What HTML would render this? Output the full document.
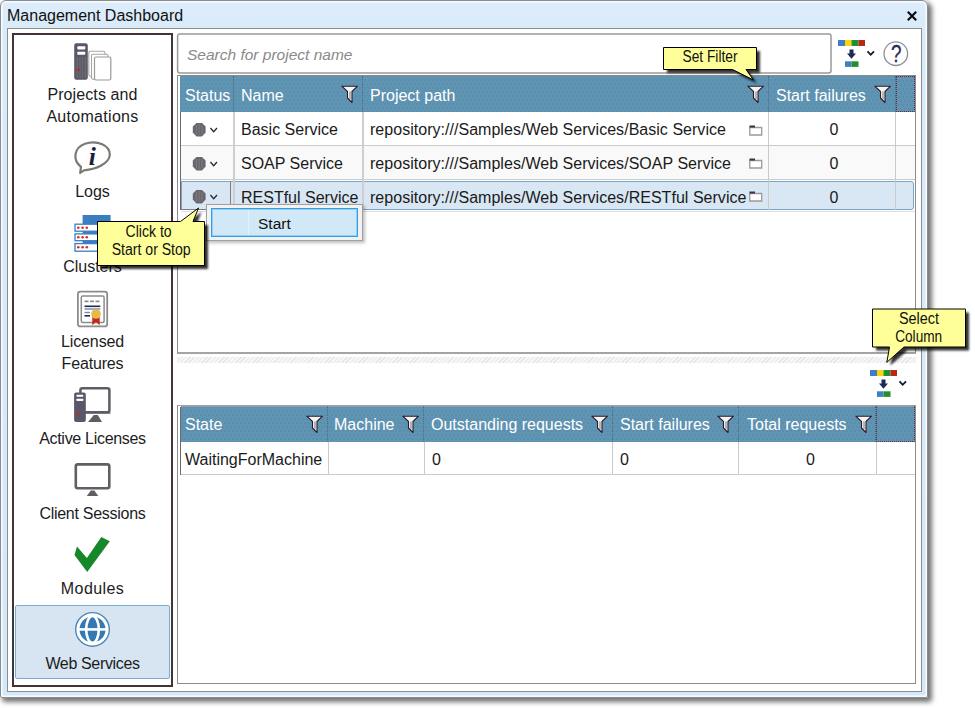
<!DOCTYPE html>
<html>
<head>
<meta charset="utf-8">
<title>Management Dashboard</title>
<style>
*{box-sizing:border-box;margin:0;padding:0}
html,body{width:975px;height:708px;background:#fff;overflow:hidden}
body{position:relative;font-family:"Liberation Sans",sans-serif;color:#1a1a1a}
.abs{position:absolute}
#win{position:absolute;left:0;top:0;width:928px;height:698px;border:1px solid #878c92;border-radius:6px 6px 2px 2px;
 background:linear-gradient(#ddedfb,#d9eaf9 28px,#d6e8f8);box-shadow:inset 0 0 0 1.500px rgba(255,255,255,.85),3px 3px 5px 1px rgba(0,0,0,.55)}
#title{position:absolute;left:6px;top:5px;font-size:16px;line-height:20px;color:#111}
#close{position:absolute;left:904px;top:8px;width:14px;height:14px}
#client{position:absolute;left:7px;top:28px;width:915px;height:664px;background:#fff;border:1px solid #8d8d8d}
#side{position:absolute;left:12px;top:33px;width:161px;height:654px;border:2px solid #433436;background:#fff}
.nav{position:absolute;left:0;width:157px;text-align:center;font-size:16px;line-height:21.5px;color:#1c1c1c}
#sel{position:absolute;left:15px;top:605px;width:155px;height:74px;background:#d6e5f1;border:1px solid #7cabd0;border-radius:2px}
#search{position:absolute;left:177px;top:33px;width:655px;height:41px;background:#fff}
#search span{position:absolute;left:10px;top:11.500px;font-size:15.500px;font-style:italic;color:#8a8a8a;line-height:20px}
.grid{position:absolute;left:177px;width:739px;border:1px solid #8c8c8c;background:#fff}
.hdr{position:absolute;background-color:#5f94b3;background-image:radial-gradient(circle,rgba(70,105,135,.2) .6px,transparent 1.1px),radial-gradient(circle,rgba(70,105,135,.2) .6px,transparent 1.1px);background-size:4px 8px;background-position:0 0,2px 4px;color:#fff;font-size:16px;line-height:39px;white-space:nowrap;border-right:1px dotted #4b6788}
.cell{position:absolute;font-size:16px;white-space:nowrap;color:#1a1a1a}
.call{position:absolute;background:#ffff99;border:1px solid #000;font-size:15px;text-align:center;color:#111;box-shadow:3px 3px 2px rgba(0,0,0,.75)}
</style>
</head>
<body>
<div id="win">
 <div id="title">Management Dashboard</div>
 <svg id="close" viewBox="0 0 14 14"><path d="M2.800 2.800 L11.200 11.200 M11.200 2.800 L2.800 11.200" stroke="#0a0a0a" stroke-width="2.100" fill="none"/></svg>
</div>
<div id="client"></div>
<div id="side">
 <div class="nav" style="top:49px"><span style="letter-spacing:.1px">Projects and</span><br><span style="letter-spacing:.3px">Automations</span></div>
 <div class="nav" style="top:146px">Logs</div>
 <div class="nav" style="top:221px">Clusters</div>
 <div class="nav" style="top:296px"><span style="letter-spacing:-.1px">Licensed</span><br><span style="letter-spacing:-.15px">Features</span></div>
 <div class="nav" style="top:393px;letter-spacing:-.3px">Active Licenses</div>
 <div class="nav" style="top:468px;letter-spacing:-.27px">Client Sessions</div>
 <div class="nav" style="top:543px;letter-spacing:.4px">Modules</div>
</div>
<div id="sel"></div>
<div class="nav" style="left:14px;top:653px;letter-spacing:-.35px">Web Services</div>
<div id="search"><span>Search for project name</span></div>
<svg class="abs" style="left:170px;top:30px" width="670" height="48" viewBox="170 30 670 48"><rect x="177.600" y="33.900" width="653.400" height="39" rx="2.200" fill="none" stroke="#999" stroke-width="1.500"/></svg>

<!-- upper grid -->
<div class="grid" style="top:75px;height:279px;border-bottom:2px solid #a4a4a4"></div>
<div class="abs" style="left:180px;top:76px;width:1px;height:134px;background:#6a6a6a"></div>
<div class="hdr" style="left:180px;top:76px;width:54px;height:36px;padding-left:5px">Status</div>
<div class="hdr" style="left:234px;top:76px;width:129px;height:36px;padding-left:7px">Name</div>
<div class="hdr" style="left:363px;top:76px;width:406px;height:36px;padding-left:7px">Project path</div>
<div class="hdr" style="left:769px;top:76px;width:127px;height:36px;padding-left:7px">Start failures</div>
<div class="hdr" style="left:896px;top:76px;width:19px;height:36px;border:1px dotted #6a2a3a"></div>

<!-- lower grid -->
<div class="grid" style="top:405px;height:279px;border-top-color:#a2a2a2"></div>
<div class="abs" style="left:180px;top:407px;width:1px;height:68px;background:#6a6a6a"></div>
<div class="hdr" style="left:181px;top:406px;width:147px;height:36px;border-top:1px solid #86a0b2;line-height:36px;padding-left:4px">State</div>
<div class="hdr" style="left:328px;top:406px;width:96px;height:36px;border-top:1px solid #86a0b2;line-height:36px;padding-left:6px">Machine</div>
<div class="hdr" style="left:424px;top:406px;width:189px;height:36px;border-top:1px solid #86a0b2;line-height:36px;padding-left:7px">Outstanding requests</div>
<div class="hdr" style="left:613px;top:406px;width:126px;height:36px;border-top:1px solid #86a0b2;line-height:36px;padding-left:7px">Start failures</div>
<div class="hdr" style="left:739px;top:406px;width:137px;height:36px;border-top:1px solid #86a0b2;line-height:36px;padding-left:8px">Total requests</div>
<div class="hdr" style="left:876px;top:406px;width:39px;height:36px;border:1px dotted #6a2a3a;border-top:1px solid #86a0b2"></div>


<!-- upper rows -->
<div class="abs" style="left:181px;top:146px;width:734px;height:33px;background:#f9f9f9"></div>
<div class="abs" style="left:181px;top:145px;width:734px;height:1px;background:#cacaca"></div>
<div class="abs" style="left:181px;top:179px;width:734px;height:1px;background:#cacaca"></div>
<div class="abs" style="left:181px;top:181px;width:733px;height:29px;background:#d8e7f3;border:1px solid #76a5c8;border-radius:0 3px 3px 0"></div>
<div class="abs" style="left:181px;top:211px;width:734px;height:1px;background:#e0e0e0"></div>
<div class="abs" style="left:233px;top:112px;width:2px;height:98px;background:#cfcfcf"></div>
<div class="abs" style="left:180px;top:181px;width:51px;height:29px;border:1px solid #7c7c84;border-left-color:#8a5858;border-top-color:#76a5c8"></div>
<div class="abs" style="left:362px;top:112px;width:2px;height:98px;background:#cfcfcf"></div>
<div class="abs" style="left:768px;top:112px;width:1px;height:98px;background:#cacaca"></div>
<div class="abs" style="left:895px;top:112px;width:1px;height:98px;background:#cacaca"></div>
<div class="cell" style="left:241px;top:120px;line-height:20px">Basic Service</div>
<div class="cell" style="left:241px;top:154px;line-height:20px">SOAP Service</div>
<div class="cell" style="left:241px;top:187.600px;line-height:20px">RESTful Service</div>
<div class="cell" style="letter-spacing:.03px;left:370px;top:120px;line-height:20px">repository:///Samples/Web Services/Basic Service</div>
<div class="cell" style="letter-spacing:.03px;left:370px;top:154px;line-height:20px">repository:///Samples/Web Services/SOAP Service</div>
<div class="cell" style="letter-spacing:.03px;left:370px;top:187.600px;line-height:20px">repository:///Samples/Web Services/RESTful Service</div>
<div class="cell" style="left:770.500px;width:127px;text-align:center;top:120px;line-height:20px">0</div>
<div class="cell" style="left:770.500px;width:127px;text-align:center;top:154px;line-height:20px">0</div>
<div class="cell" style="left:770.500px;width:127px;text-align:center;top:187.600px;line-height:20px">0</div>

<!-- lower rows -->
<div class="abs" style="left:181px;top:474px;width:734px;height:1px;background:#cacaca"></div>
<div class="abs" style="left:328px;top:442px;width:1px;height:33px;background:#cacaca"></div>
<div class="abs" style="left:424px;top:442px;width:1px;height:33px;background:#cacaca"></div>
<div class="abs" style="left:612px;top:442px;width:1px;height:33px;background:#cacaca"></div>
<div class="abs" style="left:738px;top:442px;width:1px;height:33px;background:#cacaca"></div>
<div class="abs" style="left:876px;top:442px;width:1px;height:33px;background:#cacaca"></div>
<div class="cell" style="left:185px;top:450px;line-height:20px">WaitingForMachine</div>
<div class="cell" style="left:432px;top:450px;line-height:20px">0</div>
<div class="cell" style="left:620px;top:450px;line-height:20px">0</div>
<div class="cell" style="left:742px;width:137px;text-align:center;top:450px;line-height:20px">0</div>

<!-- splitter -->
<div class="abs" style="left:177px;top:357px;width:739px;height:6px;background:repeating-linear-gradient(135deg,#e6e6e6 0,#e6e6e6 1px,#f6f6f6 1px,#f6f6f6 3px)"></div>


<!-- header icons -->
<svg class="abs" style="left:341.3px;top:85px" width="18" height="19" viewBox="0 0 18 19"><path d="M0.800 1.200 H16.500 L11 6.500 V17.500 L6.500 13 V6.500 Z" fill="#f4f4f0" stroke="#2a1c30" stroke-width="1.100" stroke-linejoin="round"/><path d="M9 6.500 V14" stroke="#a8a8a0" stroke-width="1.600"/></svg><svg class="abs" style="left:746.6px;top:85px" width="18" height="19" viewBox="0 0 18 19"><path d="M0.800 1.200 H16.500 L11 6.500 V17.500 L6.500 13 V6.500 Z" fill="#f4f4f0" stroke="#2a1c30" stroke-width="1.100" stroke-linejoin="round"/><path d="M9 6.500 V14" stroke="#a8a8a0" stroke-width="1.600"/></svg><svg class="abs" style="left:874px;top:85px" width="18" height="19" viewBox="0 0 18 19"><path d="M0.800 1.200 H16.500 L11 6.500 V17.500 L6.500 13 V6.500 Z" fill="#f4f4f0" stroke="#2a1c30" stroke-width="1.100" stroke-linejoin="round"/><path d="M9 6.500 V14" stroke="#a8a8a0" stroke-width="1.600"/></svg><svg class="abs" style="left:306px;top:415px" width="18" height="19" viewBox="0 0 18 19"><path d="M0.800 1.200 H16.500 L11 6.500 V17.500 L6.500 13 V6.500 Z" fill="#f4f4f0" stroke="#2a1c30" stroke-width="1.100" stroke-linejoin="round"/><path d="M9 6.500 V14" stroke="#a8a8a0" stroke-width="1.600"/></svg><svg class="abs" style="left:402.2px;top:415px" width="18" height="19" viewBox="0 0 18 19"><path d="M0.800 1.200 H16.500 L11 6.500 V17.500 L6.500 13 V6.500 Z" fill="#f4f4f0" stroke="#2a1c30" stroke-width="1.100" stroke-linejoin="round"/><path d="M9 6.500 V14" stroke="#a8a8a0" stroke-width="1.600"/></svg><svg class="abs" style="left:591px;top:415px" width="18" height="19" viewBox="0 0 18 19"><path d="M0.800 1.200 H16.500 L11 6.500 V17.500 L6.500 13 V6.500 Z" fill="#f4f4f0" stroke="#2a1c30" stroke-width="1.100" stroke-linejoin="round"/><path d="M9 6.500 V14" stroke="#a8a8a0" stroke-width="1.600"/></svg><svg class="abs" style="left:717px;top:415px" width="18" height="19" viewBox="0 0 18 19"><path d="M0.800 1.200 H16.500 L11 6.500 V17.500 L6.500 13 V6.500 Z" fill="#f4f4f0" stroke="#2a1c30" stroke-width="1.100" stroke-linejoin="round"/><path d="M9 6.500 V14" stroke="#a8a8a0" stroke-width="1.600"/></svg><svg class="abs" style="left:854.5px;top:415px" width="18" height="19" viewBox="0 0 18 19"><path d="M0.800 1.200 H16.500 L11 6.500 V17.500 L6.500 13 V6.500 Z" fill="#f4f4f0" stroke="#2a1c30" stroke-width="1.100" stroke-linejoin="round"/><path d="M9 6.500 V14" stroke="#a8a8a0" stroke-width="1.600"/></svg>
<svg class="abs" style="left:192px;top:122px" width="28" height="16" viewBox="0 0 28 16"><path d="M4.500 1 H10 L13.600 4.500 V10.500 L10 14.500 H4.500 L0.800 10.500 V4.500 Z" fill="#6a6670"/><path d="M4.500 3 V12.500 M7.200 2 V13.500 M10 3 V12.500" stroke="#7d8278" stroke-width=".8"/><path d="M18.400 6 L21.700 9.800 L25 6" fill="none" stroke="#2a2a30" stroke-width="1.300"/></svg><svg class="abs" style="left:192px;top:156px" width="28" height="16" viewBox="0 0 28 16"><path d="M4.500 1 H10 L13.600 4.500 V10.500 L10 14.500 H4.500 L0.800 10.500 V4.500 Z" fill="#6a6670"/><path d="M4.500 3 V12.500 M7.200 2 V13.500 M10 3 V12.500" stroke="#7d8278" stroke-width=".8"/><path d="M18.400 6 L21.700 9.800 L25 6" fill="none" stroke="#2a2a30" stroke-width="1.300"/></svg><svg class="abs" style="left:192px;top:189px" width="28" height="16" viewBox="0 0 28 16"><path d="M4.500 1 H10 L13.600 4.500 V10.500 L10 14.500 H4.500 L0.800 10.500 V4.500 Z" fill="#6a6670"/><path d="M4.500 3 V12.500 M7.200 2 V13.500 M10 3 V12.500" stroke="#7d8278" stroke-width=".8"/><path d="M18.400 6 L21.700 9.800 L25 6" fill="none" stroke="#2a2a30" stroke-width="1.300"/></svg>
<svg class="abs" style="left:749px;top:125px" width="14" height="11" viewBox="0 0 14 11"><path d="M0.800 2.500 H12.700 V10 H0.800 Z" fill="#fff" stroke="#9a9a9a" stroke-width="1.300"/><path d="M0.500 0.500 H6 V2.500 H0.500 Z" fill="#3a3050"/></svg><svg class="abs" style="left:749px;top:158px" width="14" height="11" viewBox="0 0 14 11"><path d="M0.800 2.500 H12.700 V10 H0.800 Z" fill="#fff" stroke="#9a9a9a" stroke-width="1.300"/><path d="M0.500 0.500 H6 V2.500 H0.500 Z" fill="#3a3050"/></svg><svg class="abs" style="left:749px;top:191px" width="14" height="11" viewBox="0 0 14 11"><path d="M0.800 2.500 H12.700 V10 H0.800 Z" fill="#fff" stroke="#9a9a9a" stroke-width="1.300"/><path d="M0.500 0.500 H6 V2.500 H0.500 Z" fill="#3a3050"/></svg>
<svg class="abs" style="left:838px;top:40px" width="38" height="28" viewBox="0 0 38 28">
<rect x="0" y="0" width="7" height="6" fill="#3f7fc4"/><rect x="7" y="0" width="6.500" height="6" fill="#fbd50a"/><rect x="13.500" y="0" width="7" height="6" fill="#23902f"/><rect x="20.500" y="0" width="6.500" height="6" fill="#bc2414"/>
<path d="M11.500 9.500 H15.500 V13.500 H18 L13.500 18.700 L9 13.500 H11.500 Z" fill="#1c2a55"/>
<rect x="7" y="21.300" width="6.500" height="5.600" fill="#3f7fc4"/><rect x="13.500" y="21.300" width="7" height="5.600" fill="#23902f"/>
<path d="M29.500 11.300 L32.700 14.800 L36 11.300" fill="none" stroke="#161630" stroke-width="1.800"/></svg><svg class="abs" style="left:870px;top:370px" width="38" height="28" viewBox="0 0 38 28">
<rect x="0" y="0" width="7" height="6" fill="#3f7fc4"/><rect x="7" y="0" width="6.500" height="6" fill="#fbd50a"/><rect x="13.500" y="0" width="7" height="6" fill="#23902f"/><rect x="20.500" y="0" width="6.500" height="6" fill="#bc2414"/>
<path d="M11.500 9.500 H15.500 V13.500 H18 L13.500 18.700 L9 13.500 H11.500 Z" fill="#1c2a55"/>
<rect x="7" y="21.300" width="6.500" height="5.600" fill="#3f7fc4"/><rect x="13.500" y="21.300" width="7" height="5.600" fill="#23902f"/>
<path d="M29.500 11.300 L32.700 14.800 L36 11.300" fill="none" stroke="#161630" stroke-width="1.800"/></svg>
<svg class="abs" style="left:882px;top:40px" width="27" height="27" viewBox="0 0 27 27"><circle cx="13.800" cy="13.700" r="11.800" fill="#fff" stroke="#8e8e9a" stroke-width="1.300"/><text x="14.300" y="22" text-anchor="middle" font-size="23" fill="#2c2c58" stroke="#2c2c58" stroke-width=".3" textLength="10.500" lengthAdjust="spacingAndGlyphs" font-family="Liberation Sans, sans-serif">?</text></svg>

<!-- sidebar icons -->
<svg class="abs" style="left:70px;top:40px" width="46" height="44" viewBox="70 40 46 44">
 <rect x="88.800" y="51.300" width="16" height="25" rx="1.500" fill="#fff" stroke="#a6a6a6" stroke-width="1.100"/>
 <rect x="91.500" y="54.300" width="16.500" height="25" rx="1.500" fill="#fff" stroke="#a6a6a6" stroke-width="1.100"/>
 <rect x="94.500" y="57" width="16.300" height="23" rx="1.500" fill="#fff" stroke="#9a9a9a" stroke-width="1.200"/>
 <rect x="74.200" y="43.200" width="13.600" height="36.600" rx="2.200" fill="#5c5668"/>
 <rect x="77.300" y="46.200" width="8" height="3.200" rx=".8" fill="#fff"/>
 <rect x="77.300" y="51.800" width="8" height="3" rx=".8" fill="#fff"/>
 <path d="M77.200 57 V78 M80 57 V78 M82.800 57 V78 M85.400 57 V78" stroke="#7a8078" stroke-width=".7"/>
 <rect x="77.200" y="68.500" width="2.600" height="2.400" fill="#c0281c"/>
</svg>
<svg class="abs" style="left:70px;top:138px" width="46" height="40" viewBox="70 138 46 40">
 <path d="M81 166.800 C72.500 160 73.500 148 85 143.800 C97 139.500 110.500 145.500 109.800 155 C109.200 163.500 96 169.500 84 170.300 L80.200 172.800 Z" fill="#fff" stroke="#7a7a72" stroke-width="2.200" stroke-linejoin="round"/>
 <text x="92.200" y="165" text-anchor="middle" font-size="25.500" font-style="italic" font-weight="bold" fill="#1c1c40" font-family="Liberation Serif, serif">i</text>
</svg>
<svg class="abs" style="left:70px;top:212px" width="46" height="42" viewBox="70 212 46 42">
 <rect x="82.600" y="215" width="28" height="30" fill="#3b7ec2"/>
 <g fill="#fff" stroke="#3b7ec2" stroke-width="1.300">
  <rect x="75" y="224.200" width="30" height="7"/><rect x="75" y="233.900" width="30" height="6.800"/><rect x="75" y="243.600" width="30" height="7.600"/>
 </g>
 <g fill="#d43020"><circle cx="78.300" cy="227.800" r="1.300"/><circle cx="82.600" cy="227.800" r="1.300"/><circle cx="86.800" cy="227.800" r="1.300"/>
 <circle cx="78.300" cy="237.300" r="1.300"/><circle cx="82.600" cy="237.300" r="1.300"/><circle cx="86.800" cy="237.300" r="1.300"/>
 <circle cx="78.300" cy="247.300" r="1.300"/><circle cx="82.600" cy="247.300" r="1.300"/><circle cx="86.800" cy="247.300" r="1.300"/></g>
</svg>
<svg class="abs" style="left:70px;top:286px" width="46" height="46" viewBox="70 286 46 46">
 <rect x="77.900" y="291.600" width="29.300" height="34.800" rx="2.500" fill="#fff" stroke="#8c8c8c" stroke-width="1.800"/>
 <rect x="81.300" y="296" width="22.800" height="26.500" rx="1.500" fill="#fff" stroke="#8c8c8c" stroke-width="1.500"/>
 <path d="M84.500 301.300 H100.300" stroke="#8a8c98" stroke-width="1.800" stroke-dasharray="4 1.500"/>
 <path d="M84.500 306.300 H100.300" stroke="#1c2860" stroke-width="1.600"/>
 <path d="M84.500 309 H100.300" stroke="#7a8aa0" stroke-width="1.400"/>
 <path d="M84.500 312.500 H90" stroke="#7a8aa0" stroke-width="1.400"/>
 <path d="M84.500 315.800 H90" stroke="#1c2860" stroke-width="1.600"/>
 <path d="M92.300 316 H99.700 V325.300 L96 322 L92.300 325.300 Z" fill="#c8281c"/>
 <circle cx="96" cy="314" r="4.800" fill="#e8b84a"/>
</svg>
<svg class="abs" style="left:70px;top:382px" width="46" height="44" viewBox="70 382 46 44">
 <rect x="80.400" y="388.300" width="29" height="24" rx="2" fill="#fff" stroke="#605c66" stroke-width="2.500"/>
 <path d="M78.500 413.200 H110.500" stroke="#605c66" stroke-width="1"/>
 <path d="M93.800 415 H97.800 L102 422 H88 Z" fill="#605c66"/>
 <rect x="74.100" y="392.400" width="11.700" height="29.700" rx="2" fill="#5c5668"/>
 <rect x="76.500" y="394.800" width="6.800" height="2" rx=".6" fill="#fff"/>
 <rect x="76.500" y="398.700" width="6.800" height="2.300" rx=".6" fill="#fff"/>
 <rect x="76.500" y="412.800" width="2.600" height="2.300" fill="#c0281c"/>
</svg>
<svg class="abs" style="left:70px;top:458px" width="46" height="42" viewBox="70 458 46 42">
 <rect x="75.800" y="464.400" width="33.500" height="23.800" rx="2" fill="#fff" stroke="#625e64" stroke-width="2.600"/>
 <path d="M90.800 490.500 H94.300 L98.300 496 H86.800 Z" fill="#625e64"/>
</svg>
<svg class="abs" style="left:70px;top:532px" width="46" height="44" viewBox="70 532 46 44">
 <path d="M77 546.600 L74.500 555.100 L87.200 572 L109.800 541.300 L101.300 537.100 L86.900 557.900 Z" fill="#17882a"/>
</svg>
<svg class="abs" style="left:72px;top:609px" width="42" height="42" viewBox="72 609 42 42">
 <circle cx="92.500" cy="629.400" r="16.800" fill="#fff" stroke="#4d86b5" stroke-width="1.400"/>
 <circle cx="92.500" cy="629.400" r="13" fill="#3679b2"/>
 <ellipse cx="92.500" cy="629.400" rx="6.300" ry="13.500" fill="none" stroke="#fff" stroke-width="2.600"/>
 <path d="M78 629.400 H107" stroke="#fff" stroke-width="2.600"/>
</svg>

<!-- context menu -->
<div class="abs" style="left:206px;top:204px;width:157px;height:37px;background:#f2f2f2;border:1px solid #a0a0a0;box-shadow:2px 2px 3px rgba(0,0,0,.25)"></div>
<div class="abs" style="left:211px;top:208px;width:147px;height:29px;background:#d1e8f7;border:1px solid #2e9fe6;box-shadow:inset 0 0 0 1px rgba(46,159,230,.35)"></div>
<div class="abs" style="left:248px;top:210px;width:1px;height:25px;background:#e4f1fa"></div>
<div class="abs" style="left:258px;top:214px;font-size:15.5px;line-height:20px;color:#111">Start</div>

<!-- callouts -->
<svg class="abs" style="left:90px;top:200px" width="125" height="75" viewBox="90 200 125 75">
 <defs><filter id="sb" x="-10%" y="-10%" width="130%" height="130%"><feGaussianBlur stdDeviation="1"/></filter></defs>
 <path d="M101 225 H208 V269 H101 Z M184 225 L201.500 212 L196.500 225 Z" fill="#000" opacity=".8" filter="url(#sb)"/>
 <path d="M97.500 221.500 H180.500 L198.500 208 L193 221.500 H204.500 V265.500 H97.500 Z" fill="#ffff99" stroke="#000" stroke-width="1"/>
 <text x="148.600" y="237.100" font-size="16" text-anchor="middle" fill="#111" font-family="Liberation Sans, sans-serif" textLength="46" lengthAdjust="spacingAndGlyphs">Click to</text>
 <text x="151.200" y="254.600" font-size="16" text-anchor="middle" fill="#111" font-family="Liberation Sans, sans-serif" textLength="79" lengthAdjust="spacingAndGlyphs">Start or Stop</text>
</svg>
<svg class="abs" style="left:655px;top:40px" width="115" height="50" viewBox="655 40 115 50">
 <path d="M667 51 H760 V73 H667 Z M736 73 L757 83.500 L749.500 73 Z" fill="#000" opacity=".8" filter="url(#sb)"/>
 <path d="M663.500 47.500 H756.500 V69.500 H746 L753.500 80 L732.500 69.500 H663.500 Z" fill="#ffff99" stroke="#000" stroke-width="1"/>
 <text x="710" y="61.500" font-size="16" text-anchor="middle" fill="#111" font-family="Liberation Sans, sans-serif" textLength="55" lengthAdjust="spacingAndGlyphs">Set Filter</text>
</svg>
<svg class="abs" style="left:865px;top:300px" width="110" height="70" viewBox="865 300 110 70">
 <path d="M876 312.500 H969 V350.500 H876 Z M893 350.500 L890.300 365.500 L907.500 350.500 Z" fill="#000" opacity=".8" filter="url(#sb)"/>
 <path d="M872.500 309 H965.500 V347 H904 L886.800 362.400 L889.500 347 H872.500 Z" fill="#ffff99" stroke="#000" stroke-width="1"/>
 <text x="919" y="324.300" font-size="16" text-anchor="middle" fill="#111" font-family="Liberation Sans, sans-serif" textLength="40" lengthAdjust="spacingAndGlyphs">Select</text>
 <text x="918.700" y="341.700" font-size="16" text-anchor="middle" fill="#111" font-family="Liberation Sans, sans-serif" textLength="47" lengthAdjust="spacingAndGlyphs">Column</text>
</svg>
</body>
</html>
